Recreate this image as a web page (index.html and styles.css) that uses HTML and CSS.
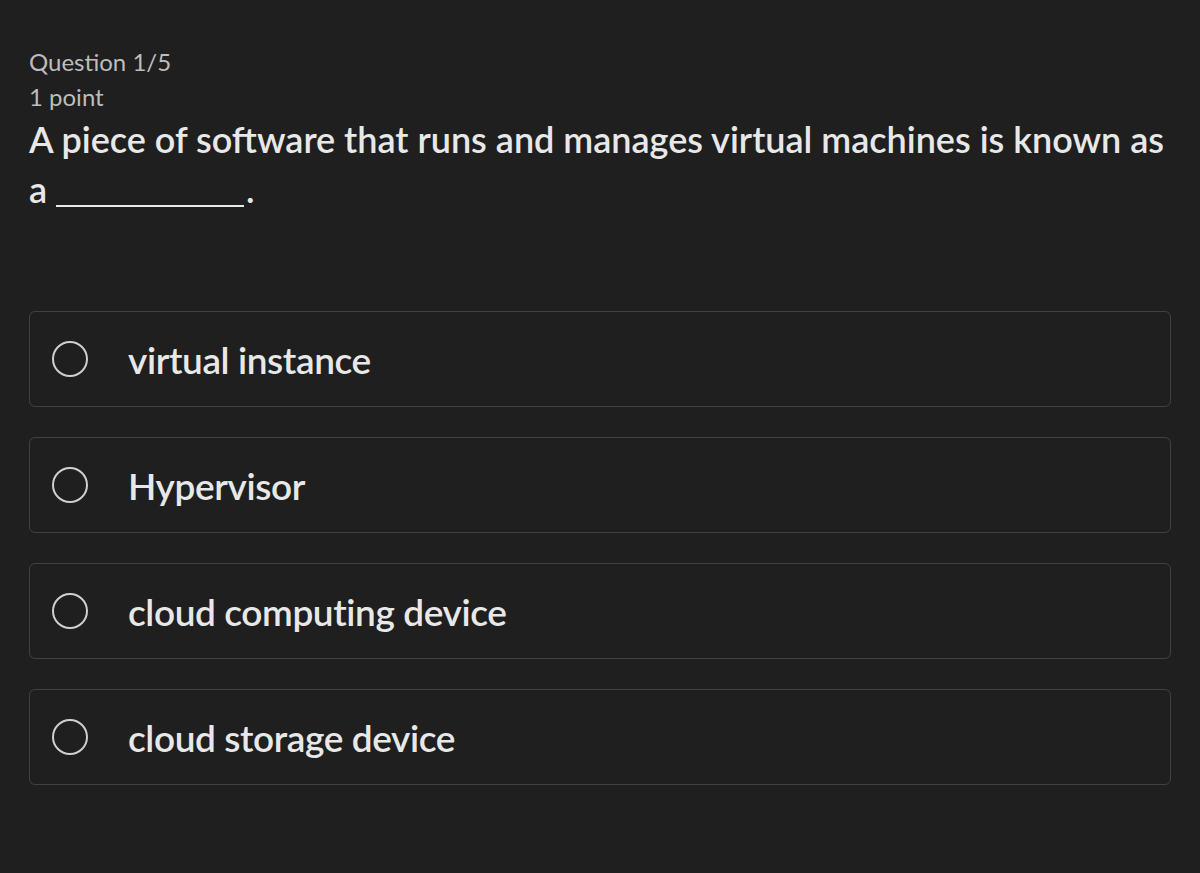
FILE: index.html
```html
<!DOCTYPE html>
<html>
<head>
<meta charset="utf-8">
<link rel="stylesheet" href="styles.css">
</head>
<body>
<main class="quiz">
  <div class="meta">
    <div class="qnum">Question 1/5</div>
    <div class="points">1 point</div>
  </div>
  <p class="prompt">A piece of software that runs and manages virtual machines is known as a <span class="blank" aria-label="blank"></span>.</p>
  <div class="options">
    <label class="option"><span class="radio"></span><span class="label">virtual instance</span></label>
    <label class="option"><span class="radio"></span><span class="label">Hypervisor</span></label>
    <label class="option"><span class="radio"></span><span class="label">cloud computing device</span></label>
    <label class="option"><span class="radio"></span><span class="label">cloud storage device</span></label>
  </div>
</main>
</body>
</html>
```
FILE: styles.css
```css
html, body {
  margin: 0;
  background: #1f1f1f;
}
body {
  font-family: Lato, "Noto Sans", sans-serif;
  color: #e6e6e6;
}
.quiz {
  padding: 44px 29px 0 29px;
}
.meta {
  color: #bdbdbd;
  font-size: 24px;
  line-height: 35px;
}
.prompt {
  margin: 0;
  font-size: 36px;
  line-height: 50px;
  font-weight: 600;
  color: #e8e8e8;
}
.blank {
  display: inline-block;
  width: 188px;
  height: 2px;
  background: #e8e8e8;
  vertical-align: -4px;
  margin-left: 0;
  margin-right: 2px;
}
.options {
  margin-top: 97px;
  display: flex;
  flex-direction: column;
  gap: 30px;
}
.option {
  height: 94px;
  border: 1px solid #414141;
  border-radius: 6px;
  display: flex;
  align-items: center;
  padding-left: 22px;
}
.radio {
  width: 32px;
  height: 32px;
  border: 2px solid #cfcfcf;
  border-radius: 50%;
  flex: none;
}
.label {
  margin-left: 40px;
  font-size: 37px;
  font-weight: 600;
  letter-spacing: -0.4px;
  color: #e8e8e8;
}
```
